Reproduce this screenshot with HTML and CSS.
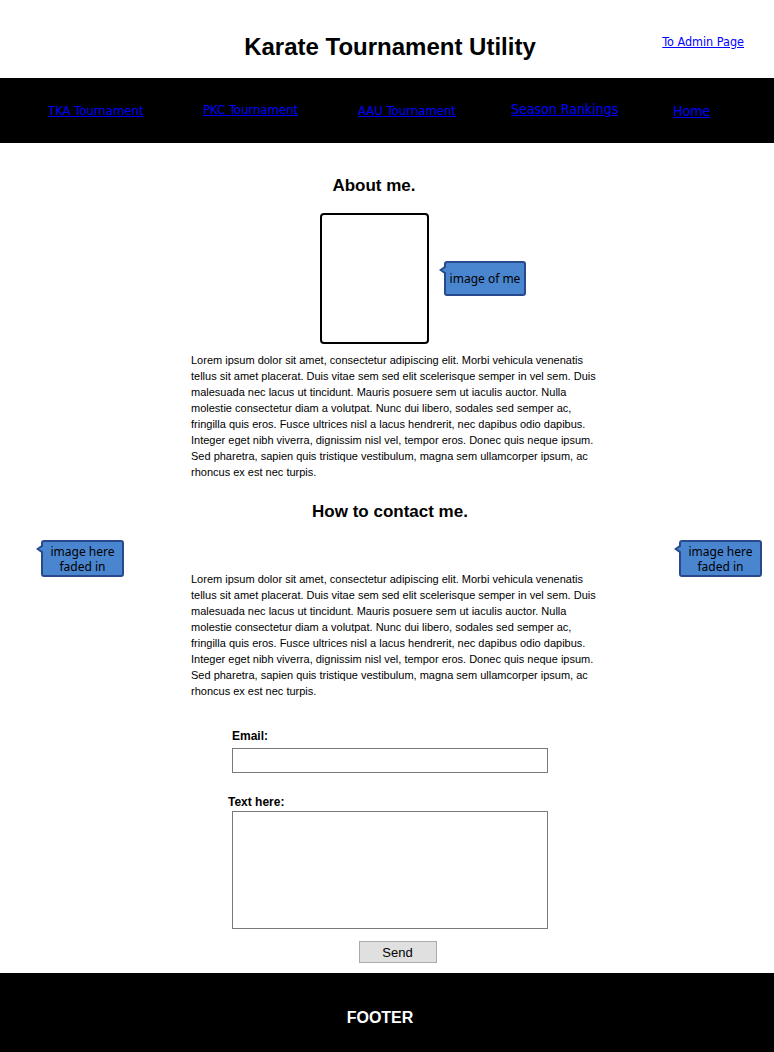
FILE: index.html
```html
<!DOCTYPE html>
<html lang="en">
<head>
<meta charset="utf-8">
<title>Karate Tournament Utility</title>
<link rel="stylesheet" href="styles.css">
</head>
<body>
<header class="top">
  <div class="top-spacer"></div>
  <h1 class="title">Karate Tournament Utility</h1>
  <a class="admin-link" href="#">To Admin Page</a>
</header>
<nav class="nav">
  <a class="nav-link nav-tka" href="#">TKA Tournament</a>
  <a class="nav-link nav-pkc" href="#">PKC Tournament</a>
  <a class="nav-link nav-aau" href="#">AAU Tournament</a>
  <a class="nav-link nav-season" href="#">Season Rankings</a>
  <a class="nav-link nav-home" href="#">Home</a>
</nav>
<main class="main">
  <section class="about">
    <h2 class="heading heading-about">About me.</h2>
    <div class="photo-row">
      <div class="photo"></div>
      <div class="bubble bubble-photo">image of me</div>
    </div>
    <p class="text">Lorem ipsum dolor sit amet, consectetur adipiscing elit. Morbi vehicula venenatis tellus sit amet placerat. Duis vitae sem sed elit scelerisque semper in vel sem. Duis malesuada nec lacus ut tincidunt. Mauris posuere sem ut iaculis auctor. Nulla molestie consectetur diam a volutpat. Nunc dui libero, sodales sed semper ac, fringilla quis eros. Fusce ultrices nisl a lacus hendrerit, nec dapibus odio dapibus. Integer eget nibh viverra, dignissim nisl vel, tempor eros. Donec quis neque ipsum. Sed pharetra, sapien quis tristique vestibulum, magna sem ullamcorper ipsum, ac rhoncus ex est nec turpis.</p>
  </section>
  <section class="contact">
    <h2 class="heading heading-contact">How to contact me.</h2>
    <div class="bubble bubble-side bubble-left">image here<br>faded in</div>
    <div class="bubble bubble-side bubble-right">image here<br>faded in</div>
    <p class="text text-contact">Lorem ipsum dolor sit amet, consectetur adipiscing elit. Morbi vehicula venenatis tellus sit amet placerat. Duis vitae sem sed elit scelerisque semper in vel sem. Duis malesuada nec lacus ut tincidunt. Mauris posuere sem ut iaculis auctor. Nulla molestie consectetur diam a volutpat. Nunc dui libero, sodales sed semper ac, fringilla quis eros. Fusce ultrices nisl a lacus hendrerit, nec dapibus odio dapibus. Integer eget nibh viverra, dignissim nisl vel, tempor eros. Donec quis neque ipsum. Sed pharetra, sapien quis tristique vestibulum, magna sem ullamcorper ipsum, ac rhoncus ex est nec turpis.</p>
    <form class="form">
      <label class="label label-email" for="email">Email:</label>
      <input class="input" id="email" type="text">
      <label class="label label-text" for="msg">Text here:</label>
      <textarea class="textarea" id="msg"></textarea>
      <button class="send" type="button">Send</button>
    </form>
  </section>
</main>
<footer class="footer">FOOTER</footer>
</body>
</html>
```

FILE: styles.css
```css
* { box-sizing: border-box; }
html, body { margin: 0; padding: 0; background: #fff; }
body {
  font-family: "Liberation Sans", Arial, sans-serif;
  color: #000;
  width: 774px;
}

.top {
  height: 78px;
  display: grid;
  grid-template-columns: 1fr auto 1fr;
  align-items: start;
}
.title {
  margin: 33px 0 0 6px;
  font-size: 24px;
  line-height: 28px;
  font-weight: bold;
}
.admin-link {
  justify-self: end;
  margin: 34px 30px 0 0;
  font-family: "Comic Sans MS", "Liberation Sans Narrow", "DejaVu Sans Condensed", "Liberation Sans", sans-serif;
  font-size: 12.5px;
  line-height: 16px;
  color: #0000ff;
}

.nav {
  height: 65px;
  background: #000;
  display: grid;
  grid-template-columns: 155px 155px 153px 162px 1fr;
  padding-left: 48px;
  align-items: start;
}
.nav-link {
  font-family: "Comic Sans MS", "Liberation Sans Narrow", "DejaVu Sans Condensed", "Liberation Sans", sans-serif;
  font-size: 13px;
  line-height: 16px;
  color: #0000ff;
  justify-self: start;
}
.nav-tka { margin-top: 25px; }
.nav-pkc { margin-top: 24px; }
.nav-aau { margin-top: 25px; }
.nav-season { margin-top: 23px; font-size: 14px; }
.nav-home { margin-top: 25px; font-size: 14px; }

.main {
  width: 400px;
  margin-left: 190px;
}

.heading {
  margin: 0;
  font-size: 17px;
  line-height: 20px;
  font-weight: bold;
  text-align: center;
}
.heading-about {
  padding-right: 32px;
  margin-top: 33px;
}
.photo-row {
  display: flex;
  align-items: flex-start;
  padding-left: 130px;
  margin-top: 17px;
}
.photo {
  width: 109px;
  height: 131px;
  border: 2px solid #000;
  border-radius: 4px;
}
.bubble {
  position: relative;
  background: #4a85cf;
  border: 2px solid #284a8c;
  border-radius: 3px;
  font-family: "Noto Sans", "Open Sans", sans-serif;
  font-size: 12px;
  line-height: 15px;
  color: #000;
  text-align: center;
}
.bubble::before {
  content: "";
  position: absolute;
  left: -7px;
  top: 2px;
  border-style: solid;
  border-width: 5px 7px 5px 0;
  border-color: transparent #284a8c transparent transparent;
}
.bubble::after {
  content: "";
  position: absolute;
  left: -4px;
  top: 4px;
  border-style: solid;
  border-width: 3px 5px 3px 0;
  border-color: transparent #4a85cf transparent transparent;
}
.bubble-photo {
  margin: 48px 0 0 15px;
  width: 82px;
  height: 35px;
  padding-top: 8px;
}
.text {
  margin: 8px 0 0 1px;
  width: 408px;
  font-size: 11px;
  line-height: 16px;
}

.contact {
  position: relative;
}
.heading-contact {
  margin-top: 22px;
}
.bubble-side {
  position: absolute;
  top: 38px;
  width: 83px;
  height: 37px;
  padding-top: 2px;
}
.bubble-left { left: -149px; }
.bubble-right { left: 489px; }
.text-contact {
  margin-top: 49px;
}

.form {
  display: flex;
  flex-direction: column;
  align-items: center;
  margin-top: 30px;
}
.label {
  font-size: 12px;
  line-height: 14px;
  font-weight: bold;
  width: 316px;
}
.label-text {
  margin-top: 22px;
  width: 324px;
}
.input {
  display: block;
  margin-top: 5px;
  width: 316px;
  height: 25px;
  border: 1px solid #7a7a7a;
  border-radius: 0;
  padding: 0;
  background: #fff;
}
.textarea {
  display: block;
  margin-top: 2px;
  width: 316px;
  height: 118px;
  border: 1px solid #7a7a7a;
  border-radius: 0;
  padding: 0;
  resize: none;
  background: #fff;
}
.send {
  margin: 12px 0 10px 15px;
  width: 78px;
  height: 22px;
  background: #e0e0e0;
  border: 1px solid #aaaaaa;
  border-radius: 0;
  font-family: "Liberation Sans", Arial, sans-serif;
  font-size: 13px;
  color: #000;
  padding: 0;
}

.footer {
  height: 79px;
  background: #000;
  color: #fff;
  font-weight: bold;
  font-size: 16px;
  line-height: 20px;
  text-align: center;
  padding-top: 35px;
  margin-left: -14px;
}
```
